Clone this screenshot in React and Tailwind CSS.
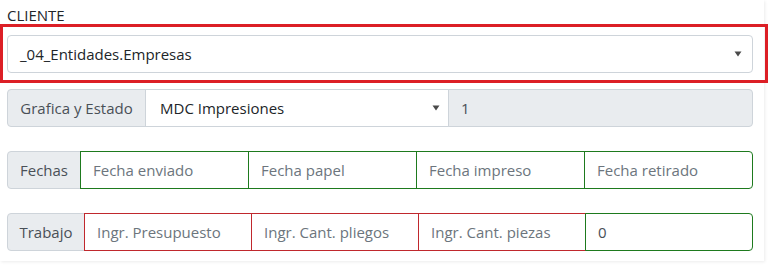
import React from "react";

const Arrow = () => (
  <svg width="8" height="6" viewBox="0 0 8 6" className="shrink-0">
    <path d="M0.5 0.5 H7.5 L4 5.5 Z" fill="#4a4a4a" />
  </svg>
);

const font = { fontFamily: '"Open Sans", "Noto Sans", sans-serif' };

export default function App() {
  return (
    <div className="w-[772px] h-[280px] bg-white" style={font}>
      <div className="w-[764px] h-[261px] bg-white shadow-[1px_1px_3px_rgba(0,0,0,0.08)] pl-[7px] pr-[11px] pt-[6px]">
        <div className="text-[15px] leading-[18px] text-[#212529]">CLIENTE</div>
        <div className="-ml-[7px] -mr-[15px] border-[3px] border-[#dc1f26] pl-[4px] pr-[12px] pt-[8px] pb-[7px]">
          <div className="h-[38px] flex items-center justify-between border border-[#ced4da] rounded-[4px] pl-[12px] pr-[10px] text-[15px] text-[#212529]">
            <span className="pt-px">_04_Entidades.Empresas</span>
            <Arrow />
          </div>
        </div>

        <div className="mt-[6px] flex h-[38px] text-[15px]">
          <div className="w-[139px] shrink-0 flex items-center justify-center bg-[#e9ecef] border border-[#ced4da] rounded-l-[4px] text-[#495057]">
            Grafica y Estado
          </div>
          <div className="w-[304px] -ml-px shrink-0 flex items-center justify-between border border-[#ced4da] pl-[14px] pr-[8px] text-[#212529]">
            <span>MDC Impresiones</span>
            <Arrow />
          </div>
          <div className="flex-1 -ml-px flex items-center bg-[#e9ecef] border border-[#ced4da] rounded-r-[4px] pl-[12px] text-[#495057]">
            1
          </div>
        </div>

        <div className="mt-[24px] flex h-[38px] text-[15px]">
          <div className="w-[74px] shrink-0 flex items-center justify-center bg-[#e9ecef] border border-[#ced4da] rounded-l-[4px] text-[#495057]">
            Fechas
          </div>
          {["Fecha enviado", "Fecha papel", "Fecha impreso", "Fecha retirado"].map((t, i) => (
            <div
              key={t}
              className={`flex-1 -ml-px flex items-center border border-[#1e7a1e] pl-[12px] text-[#6c757d] ${i === 3 ? "rounded-r-[4px]" : ""}`}
            >
              {t}
            </div>
          ))}
        </div>

        <div className="mt-[24px] flex h-[38px] text-[15px]">
          <div className="w-[78px] shrink-0 flex items-center justify-center bg-[#e9ecef] border border-[#ced4da] rounded-l-[4px] text-[#495057]">
            Trabajo
          </div>
          {["Ingr. Presupuesto", "Ingr. Cant. pliegos", "Ingr. Cant. piezas"].map((t) => (
            <div key={t} className="flex-1 -ml-px flex items-center border border-[#c0282d] pl-[12px] text-[#6c757d]">
              {t}
            </div>
          ))}
          <div className="flex-1 -ml-px flex items-center border border-[#1e7a1e] rounded-r-[4px] pl-[12px] text-[#495057]">
            0
          </div>
        </div>
      </div>
    </div>
  );
}
